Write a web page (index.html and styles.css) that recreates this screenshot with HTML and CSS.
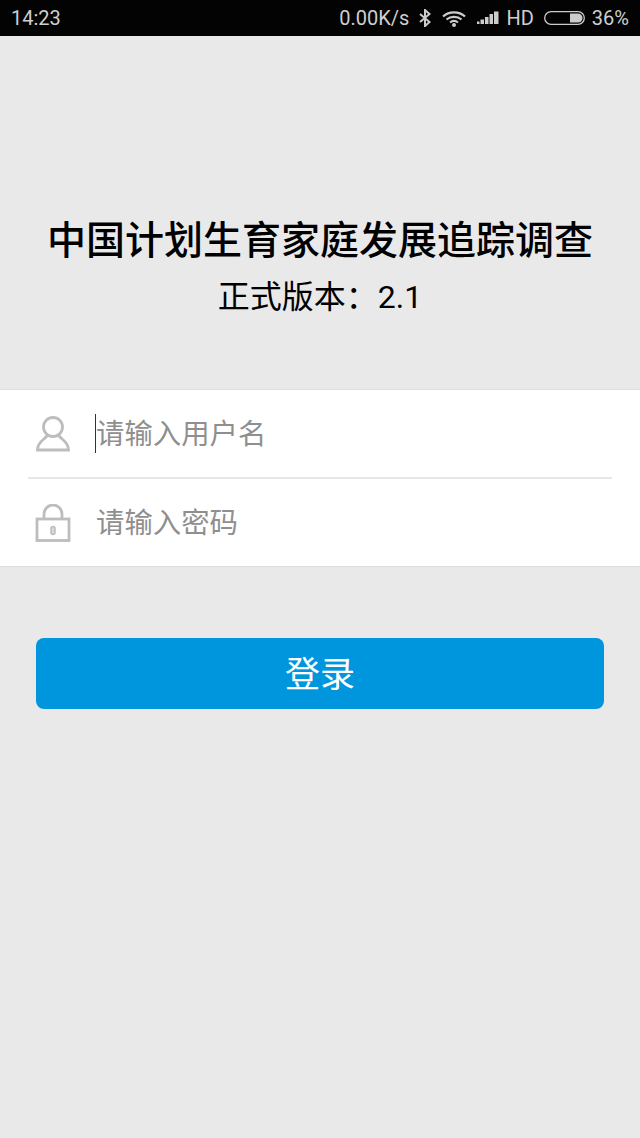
FILE: index.html
```html
<!DOCTYPE html>
<html lang="zh">
<head>
<meta charset="utf-8">
<title>中国计划生育家庭发展追踪调查</title>
<link rel="stylesheet" href="styles.css">
</head>
<body>
<div class="status">
  <span class="time">14:23</span>
  <div class="status-right">
    <span class="speed">0.00K/s</span>
    <svg class="bt" width="12" height="18" viewBox="0 0 12 18"><path d="M1 5l9.500 8-4.500 4V1l4.500 4L1 13" fill="none" stroke="#ccc" stroke-width="2"/></svg>
    <svg class="wifi" width="24" height="17" viewBox="0 0 24 17"><g fill="none" stroke="#ccc" stroke-width="2.200"><path d="M1 6.500C7 1 17 1 23 6.500"/><path d="M4.500 9.500C8.500 6 15.500 6 19.500 9.500"/><path d="M8 12.500C10.500 10.500 13.500 10.500 16 12.500"/></g><circle cx="12" cy="15" r="2" fill="#ccc"/></svg>
    <svg class="signal" width="22" height="14" viewBox="0 0 22 14"><g fill="#ccc"><rect x="0" y="10.500" width="2.500" height="2.500"/><rect x="3.500" y="8.500" width="3.500" height="4.500"/><rect x="8" y="6" width="3.500" height="7"/><rect x="12.500" y="3" width="3.500" height="10"/><rect x="17" y="0.500" width="4.500" height="12.500"/></g></svg>
    <span class="hd">HD</span>
    <svg class="battery" width="42" height="14" viewBox="0 0 42 14"><rect x="0.700" y="0.700" width="39.600" height="12.600" rx="6.300" fill="none" stroke="#ccc" stroke-width="1.300"/><path d="M26 2.500h8a4.500 4.500 0 0 1 0 9h-8z" fill="#ccc"/></svg>
    <span class="pct">36%</span>
  </div>
</div>
<main>
  <header class="heading">
    <h1>中国计划生育家庭发展追踪调查</h1>
    <p>正式版本：2.1</p>
  </header>
  <section class="form">
    <div class="row row-first">
      <svg class="icon" width="36" height="36" viewBox="0 0 36 36"><g fill="none" stroke="#bdbdbd" stroke-width="2.800"><circle cx="18" cy="11" r="9.500"/><path d="M12 19.500C11 23 2.500 25 2.500 34h31C33.500 25 25 23 24 19.500"/></g></svg>
      <div class="field"><i class="caret"></i><span class="ph">请输入用户名</span></div>
    </div>
    <div class="row">
      <svg class="icon" width="36" height="38" viewBox="0 0 36 38"><g fill="none" stroke="#bdbdbd" stroke-width="2.800"><rect x="2" y="15" width="32" height="21.500"/><path d="M9 15V10a9 9 0 0 1 18 0v5"/></g><rect x="16" y="22.500" width="4" height="8" rx="2" fill="#d8d8d8" stroke="#bdbdbd" stroke-width="1.500"/></svg>
      <div class="field"><span class="ph">请输入密码</span></div>
    </div>
  </section>
  <button class="login" type="button">登录</button>
</main>
</body>
</html>
```
FILE: styles.css
```css
* { box-sizing: border-box; }
html, body { margin: 0; padding: 0; }
body {
  width: 640px;
  height: 1138px;
  overflow: hidden;
  background: #e9e9ea;
  font-family: Roboto, "Noto Sans CJK SC", sans-serif;
}
.status {
  height: 36px;
  background: #030303;
  color: #cfcfcf;
  display: flex;
  align-items: center;
  justify-content: space-between;
  padding: 0 11px;
  font-size: 20px;
}
.status-right { display: flex; align-items: center; }
.speed { margin-right: 10px; }
.bt { margin-right: 11px; }
.wifi { margin-right: 11px; }
.signal { margin-right: 7px; }
.hd { margin-right: 10px; }
.battery { margin-right: 6px; }
.heading { padding-top: 182px; text-align: center; color: #000; }
.heading h1 {
  margin: 0;
  font-size: 39px;
  line-height: 46px;
  font-weight: 500;
}
.heading p {
  margin: 14px 0 0;
  font-size: 32px;
  line-height: 38px;
}
.form {
  margin-top: 73px;
  height: 178px;
  background: #fff;
  border-top: 1px solid #dedede;
  border-bottom: 1px solid #dedede;
  padding: 0 28px;
}
.row {
  height: 87px;
  display: flex;
  align-items: center;
  padding-left: 7px;
}
.row-first { height: 89px; border-bottom: 2px solid #e6e6e6; }
.icon { flex: none; }
.field {
  display: flex;
  align-items: center;
  margin-left: 24px;
}
.caret {
  width: 1px;
  height: 39px;
  background: #333;
  margin-right: -1px;
}
.ph {
  font-size: 28.400px;
  line-height: 38px;
  color: #8f8f8f;
  margin-left: 1px;
  padding-top: 2px;
}
.login {
  display: block;
  width: 568px;
  height: 71px;
  margin: 71px 0 0 36px;
  padding: 0 0 5px;
  border: 0;
  border-radius: 8px;
  background: #0096dd;
  color: #fff;
  font-family: inherit;
  font-size: 35px;
}
```
